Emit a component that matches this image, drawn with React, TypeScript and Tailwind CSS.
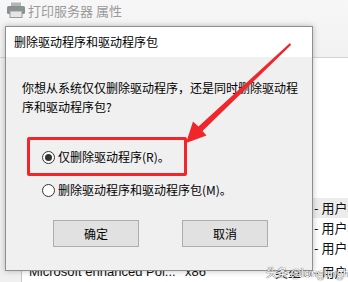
import React from "react";

const cjk = { fontFamily: '"Noto Sans CJK SC", "Noto Sans", sans-serif' };
const latin = { fontFamily: '"Liberation Sans", Arial, sans-serif' };

function PrinterIcon() {
  return (
    <svg width="20" height="16" viewBox="0 0 20 16">
      <rect x="5" y="0.5" width="10" height="4" fill="#b5b5b5" />
      <rect x="1" y="4" width="18" height="8" rx="1.5" fill="#8a8f94" />
      <rect x="4" y="9" width="12" height="6.5" fill="#e6e6e6" stroke="#9a9a9a" strokeWidth="1" />
      <rect x="14.5" y="5.5" width="2" height="1.5" fill="#5fc25f" />
    </svg>
  );
}

function Radio({ checked }: { checked?: boolean }) {
  return (
    <span className="w-[13px] h-[13px] rounded-full border border-[#333] bg-white flex items-center justify-center shrink-0">
      {checked && <span className="w-[7px] h-[7px] rounded-full bg-[#333]" />}
    </span>
  );
}

function Row({ selected, last }: { selected?: boolean; last?: boolean }) {
  return (
    <div className={`h-[20px] shrink-0 flex text-[13px] text-[#111] ${last ? "items-start pt-[6px]" : "items-center"} ${selected ? "bg-[#ececec]" : ""}`}>
      <div className={`w-[22px] shrink-0 bg-[#f0f0f0] border-r border-[#c8c8c8] ${last ? "h-[20px] -mt-[6px]" : "h-full"}`} />
      <div className="w-[163px] shrink-0 pl-[7px] whitespace-nowrap leading-[16px]" style={latin}>Microsoft enhanced Poi...</div>
      <div className="w-[90px] shrink-0 whitespace-nowrap leading-[16px]" style={latin}>x86</div>
      <div className="shrink-0 whitespace-nowrap leading-[16px] text-[13px]" style={cjk}>类型 3 - 用户模式</div>
    </div>
  );
}

export default function App() {
  return (
    <div className="relative w-[348px] h-[282px] overflow-hidden bg-white" style={cjk}>
      {/* background window */}
      <div className="flex flex-col h-full">
        <div className="h-[58px] shrink-0 bg-gradient-to-b from-[#f7f7f7] to-[#f1f1f1] border-b border-[#d4d4d4] flex items-start pt-[2px] pl-[6px] gap-[1px]">
          <PrinterIcon />
          <span className="text-[13px] leading-[18px] text-[#9a9a9a] ml-[1px]">打印服务器 属性</span>
        </div>
        <div className="flex-1 flex flex-col">
          <div className="flex-1 flex">
            <div className="w-[22px] bg-[#f0f0f0] border-r border-[#c8c8c8]" />
          </div>
          <Row selected />
          <Row />
          <Row />
          <Row last />
          <div className="h-[4px] shrink-0 flex">
            <div className="w-[22px] bg-[#f0f0f0] border-r border-[#c8c8c8]" />
          </div>
        </div>
      </div>

      {/* dialog */}
      <div className="absolute left-[5px] top-[26px] w-[308px] h-[245px] border border-[#8f8f8f] bg-[#f0f0f0] shadow-[0_0_6px_rgba(0,0,0,0.25)] flex flex-col">
        <div className="h-[30px] bg-white flex items-center pl-[8px] text-[12px] text-black">删除驱动程序和驱动程序包</div>
        <div className="flex flex-col pl-[16px] pt-[21px] text-[12px] text-black">
          <p className="leading-[19px] w-[285px]">你想从系统仅仅删除驱动程序，还是同时删除驱动程序和驱动程序包?</p>
          <div className="flex flex-col pl-[20px] mt-[31px] gap-[13px]">
            <label className="h-[20px] flex items-center gap-[3px]">
              <Radio checked />
              <span>仅删除驱动程序(R)。</span>
            </label>
            <label className="h-[20px] flex items-center gap-[3px]">
              <Radio />
              <span>删除驱动程序和驱动程序包(M)。</span>
            </label>
          </div>
          <div className="flex gap-[43px] pl-[31px] mt-[20px]">
            <button className="w-[86px] h-[27px] bg-[#e1e1e1] border border-[#adadad] text-[12px] text-black">确定</button>
            <button className="w-[86px] h-[27px] bg-[#e1e1e1] border border-[#adadad] text-[12px] text-black">取消</button>
          </div>
        </div>
      </div>

      {/* red highlight box */}
      <div className="absolute left-[27px] top-[137px] w-[160px] h-[39px] border-[3px] border-[#f0262a] rounded-[2px]" />

      {/* red arrow */}
      <svg className="absolute left-0 top-0" width="348" height="282" viewBox="0 0 348 282">
        <polygon
          points="290,43 291,45 202.5,131 206.5,135.5 186,143 193,121.5 198.5,126.5"
          fill="#f0262a"
        />
      </svg>

      {/* watermark */}
      <div
        className="absolute left-[266px] top-[264px] text-[11px] text-white whitespace-nowrap"
        style={{ ...cjk, textShadow: "0 0 1px #555, 0 0 1px #555" }}
      >
        头条 @longlinghui
      </div>
    </div>
  );
}
